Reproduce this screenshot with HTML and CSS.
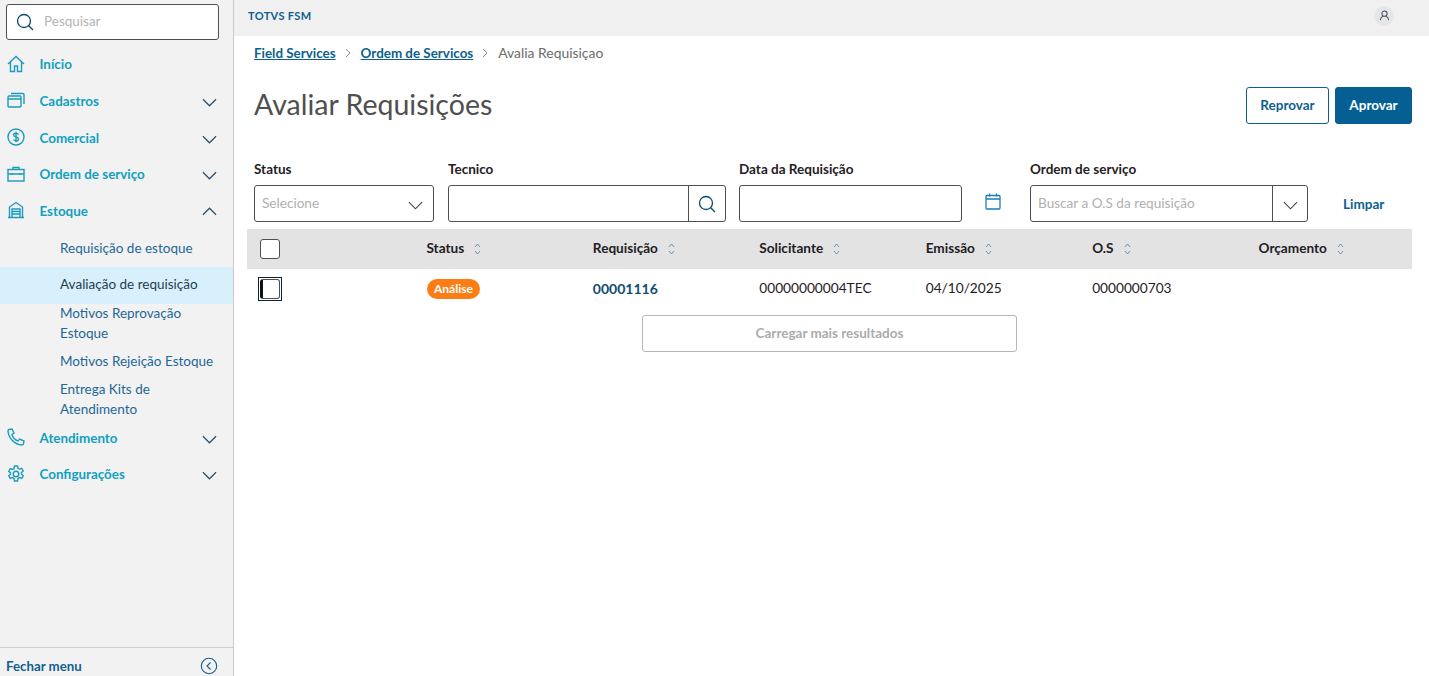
FILE: index.html
```html
<!DOCTYPE html>
<html lang="pt-BR">
<head>
<meta charset="utf-8">
<title>Avaliar Requisições</title>
<link rel="stylesheet" href="styles.css">
</head>
<body>
<div class="app">
  <aside class="sidebar">
    <div class="side-search">
      <div class="search-box">
        <svg class="ic-search" viewBox="0 0 18 18"><circle cx="8" cy="8" r="6.5"/><path d="M12.7 12.7L17 17"/></svg>
        <span class="placeholder">Pesquisar</span>
      </div>
    </div>
    <nav class="menu">
      <div class="item">
        <svg class="ic" viewBox="0 0 18 18"><path d="M1 9l8-7.5L17 9M3.5 7v9.5h4V11h3v5.5h4V7"/></svg>
        <span class="item-label">Início</span>
      </div>
      <div class="item">
        <svg class="ic" viewBox="0 0 18 18"><rect x="1" y="5" width="13" height="11" rx="1"/><path d="M1 8h13M4 2.5h12a1 1 0 0 1 1 1V13"/></svg>
        <span class="item-label">Cadastros</span>
        <svg class="chev" viewBox="0 0 16 9"><path d="M1 1l7 7 7-7"/></svg>
      </div>
      <div class="item">
        <svg class="ic" viewBox="0 0 18 18"><circle cx="9" cy="9" r="8"/><path d="M11.5 6.5C11 5.5 10 5.200 9 5.200c-1.500 0-2.500.8-2.500 1.900 0 2.700 5 1.200 5 3.800 0 1.100-1 1.900-2.500 1.900-1 0-2-.4-2.500-1.300M9 3.800v10.400"/></svg>
        <span class="item-label">Comercial</span>
        <svg class="chev" viewBox="0 0 16 9"><path d="M1 1l7 7 7-7"/></svg>
      </div>
      <div class="item">
        <svg class="ic" viewBox="0 0 18 18"><rect x="1" y="4.500" width="16" height="11.500"/><path d="M6 4.500V2.500h6v2M1 9h16M5 8v2M13 8v2"/></svg>
        <span class="item-label">Ordem de serviço</span>
        <svg class="chev" viewBox="0 0 16 9"><path d="M1 1l7 7 7-7"/></svg>
      </div>
      <div class="item">
        <svg class="ic" viewBox="0 0 18 18"><path d="M1 16.500h16M2.500 16.500V6L9 1.500 15.500 6v10.500M5 16.500V8h8v8.500M5 10.500h8M5 13h8"/></svg>
        <span class="item-label">Estoque</span>
        <svg class="chev chev-up" viewBox="0 0 16 9"><path d="M1 8l7-7 7 7"/></svg>
      </div>
      <div class="subs">
        <a class="sub sub-first">Requisição de estoque</a>
        <a class="sub sub-active">Avaliação de requisição</a>
        <a class="sub sub-two">Motivos Reprovação Estoque</a>
        <a class="sub sub-one">Motivos Rejeição Estoque</a>
        <a class="sub sub-two">Entrega Kits de Atendimento</a>
      </div>
      <div class="item">
        <svg class="ic" viewBox="0 0 18 18"><path d="M2 1.500L5 1l2 4-2 1.500c.8 3 3.200 5.500 6 6.500l1.700-2 4.300 2-.6 3c-.2.600-.8 1-1.400 1C7.500 16.500 1.500 10 1 3c0-.7.400-1.300 1-1.500z"/></svg>
        <span class="item-label">Atendimento</span>
        <svg class="chev" viewBox="0 0 16 9"><path d="M1 1l7 7 7-7"/></svg>
      </div>
      <div class="item">
        <svg class="ic" viewBox="0 0 18 18"><circle cx="9" cy="9" r="2.800"/><path d="M7.500 1h3l.5 2.300 1.500.8 2.200-.8 1.500 2.600-1.700 1.600v1.700l1.700 1.600-1.500 2.600-2.200-.8-1.500.8-.5 2.600h-3l-.5-2.600-1.500-.8-2.200.8-1.500-2.600 1.700-1.600V7.900L1.800 6.300l1.500-2.600 2.200.8 1.500-.8z"/></svg>
        <span class="item-label">Configurações</span>
        <svg class="chev" viewBox="0 0 16 9"><path d="M1 1l7 7 7-7"/></svg>
      </div>
    </nav>
    <div class="side-foot">
      <span class="foot-label">Fechar menu</span>
      <svg class="foot-ic" viewBox="0 0 18 18"><circle cx="9" cy="9" r="7.700"/><path d="M10.500 5.500L7 9l3.500 3.500"/></svg>
    </div>
  </aside>
  <div class="main">
    <header class="topbar">
      <span class="brand">TOTVS FSM</span>
      <span class="avatar"><svg viewBox="0 0 12 12"><circle cx="6" cy="4" r="2.800"/><path d="M1.500 11c.3-2.300 1.500-3.800 2.800-4.300M10.500 11c-.3-2.300-1.500-3.800-2.800-4.300"/></svg></span>
    </header>
    <div class="content">
      <div class="crumbs">
        <a class="crumb-link">Field Services</a>
        <svg class="crumb-sep" viewBox="0 0 6 10"><path d="M1 1l4 4-4 4"/></svg>
        <a class="crumb-link">Ordem de Servicos</a>
        <svg class="crumb-sep" viewBox="0 0 6 10"><path d="M1 1l4 4-4 4"/></svg>
        <span class="crumb-cur">Avalia Requisiçao</span>
      </div>
      <div class="head">
        <h1 class="title">Avaliar Requisições</h1>
        <div class="actions">
          <button class="btn btn-out">Reprovar</button>
          <button class="btn btn-fill">Aprovar</button>
        </div>
      </div>
      <div class="filters">
        <div class="field f-status">
          <label class="lbl">Status</label>
          <div class="ctl">
            <span class="ph grow">Selecione</span>
            <svg class="chev-d" viewBox="0 0 16 9"><path d="M1 1l7 7 7-7"/></svg>
          </div>
        </div>
        <div class="field f-tec">
          <label class="lbl">Tecnico</label>
          <div class="ctl ctl-tight">
            <span class="grow"></span>
            <span class="addon"><svg class="ic-search" viewBox="0 0 18 18"><circle cx="8" cy="8" r="6.500"/><path d="M12.700 12.700L17 17"/></svg></span>
          </div>
        </div>
        <div class="field f-date">
          <label class="lbl">Data da Requisição</label>
          <div class="ctl"></div>
        </div>
        <svg class="cal" viewBox="0 0 16 17"><rect x="1" y="2.500" width="14" height="13.500" rx="1"/><path d="M1 6h14M4.500 .5v3M11.500 .5v3"/></svg>
        <div class="field f-os">
          <label class="lbl">Ordem de serviço</label>
          <div class="ctl ctl-tight">
            <span class="ph grow">Buscar a O.S da requisição</span>
            <span class="addon addon-os"><svg class="chev-d" viewBox="0 0 16 9"><path d="M1 1l7 7 7-7"/></svg></span>
          </div>
        </div>
        <a class="clear">Limpar</a>
      </div>
      <div class="table">
        <div class="tr thead">
          <div class="td td-check"><span class="box"></span></div>
          <div class="td"><span class="th">Status</span><svg class="sort" viewBox="0 0 7 12"><path d="M1 4l2.500-3L6 4M1 8l2.500 3L6 8"/></svg></div>
          <div class="td"><span class="th">Requisição</span><svg class="sort" viewBox="0 0 7 12"><path d="M1 4l2.500-3L6 4M1 8l2.500 3L6 8"/></svg></div>
          <div class="td"><span class="th">Solicitante</span><svg class="sort" viewBox="0 0 7 12"><path d="M1 4l2.500-3L6 4M1 8l2.500 3L6 8"/></svg></div>
          <div class="td"><span class="th">Emissão</span><svg class="sort" viewBox="0 0 7 12"><path d="M1 4l2.500-3L6 4M1 8l2.500 3L6 8"/></svg></div>
          <div class="td"><span class="th">O.S</span><svg class="sort" viewBox="0 0 7 12"><path d="M1 4l2.500-3L6 4M1 8l2.500 3L6 8"/></svg></div>
          <div class="td"><span class="th">Orçamento</span><svg class="sort" viewBox="0 0 7 12"><path d="M1 4l2.500-3L6 4M1 8l2.500 3L6 8"/></svg></div>
        </div>
        <div class="tr tbody">
          <div class="td td-check"><span class="focus"><span class="box box-row"></span></span></div>
          <div class="td"><span class="tag">Análise</span></div>
          <div class="td"><a class="req">00001116</a></div>
          <div class="td"><span class="cell">00000000004TEC</span></div>
          <div class="td"><span class="cell">04/10/2025</span></div>
          <div class="td"><span class="cell">0000000703</span></div>
          <div class="td"></div>
        </div>
      </div>
      <div class="more-wrap"><button class="more">Carregar mais resultados</button></div>
    </div>
  </div>
</div>
</body>
</html>
```
FILE: styles.css
```css
* { box-sizing: border-box; }
html, body { margin: 0; height: 100%; overflow: hidden; background: #fff; }
body { font-family: "Lato", "Open Sans", sans-serif; font-size: 14px; color: #1f2024; }
.app { display: flex; height: 676px; }

.sidebar { width: 234px; flex: none; background: #f2f2f2; border-right: 1px solid #c9c9c9; display: flex; flex-direction: column; }
.side-search { padding: 4px 14px 0 6px; }
.search-box { height: 36px; background: #fff; border: 1px solid #4f4f4f; border-radius: 3px; display: flex; align-items: center; padding-left: 9px; gap: 10px; }
.ic-search { width: 18px; height: 18px; fill: none; stroke: #0c4a6e; stroke-width: 1.300; flex: none; }
.placeholder { color: #b5b5b5; font-size: 13.500px; padding-bottom: 3px; }
.menu { flex: 1; padding-top: 6.300px; }
.item { height: 36.700px; display: flex; align-items: center; padding: 0 16px 0 7px; color: #10a0c0; font-weight: 700; font-size: 13.400px; }
.item-label { flex: 1; padding-bottom: 1px; }
.ic { width: 18px; height: 18px; fill: none; stroke: #1b9cbd; stroke-width: 1.400; flex: none; margin: 0 14.500px 2px 0; }
.chev { width: 15px; height: 9px; fill: none; stroke: #2c4f6e; stroke-width: 1.300; flex: none; margin-top: 2px; }
.chev-up { margin-top: 0; }
.subs { display: flex; flex-direction: column; }
.sub { display: flex; align-items: center; padding: 0 10px 2px 60px; color: #1e6796; font-size: 13.500px; line-height: 20px; }
.sub-first { height: 37px; padding-bottom: 0; }
.sub-active { height: 37px; background: #d7f0fc; color: #24404f; border-radius: 0 4px 4px 0; }
.sub-two { height: 40px; }
.sub-one { height: 36px; }
.side-foot { height: 29px; border-top: 1px solid #cfcfcf; display: flex; align-items: center; justify-content: space-between; padding: 8px 15px 0 6px; color: #125f91; font-weight: 700; font-size: 13.300px; }
.foot-ic { width: 18px; height: 18px; fill: none; stroke: #125f91; stroke-width: 1.100; }

.main { flex: 1; min-width: 0; display: flex; flex-direction: column; }
.topbar { height: 36px; background: #f0f0f0; display: flex; align-items: center; justify-content: space-between; padding: 0 35px 5px 14px; }
.brand { font-size: 11px; font-weight: 700; color: #0c5f8f; letter-spacing: .35px; }
.avatar { width: 20px; height: 20px; border-radius: 50%; background: #e6e6e6; display: flex; align-items: center; justify-content: center; }
.avatar svg { width: 11px; height: 11px; fill: none; stroke: #3d4d62; stroke-width: 1.100; }

.content { padding: 0 17px 0 13px; }
.crumbs { height: 33px; display: flex; align-items: center; padding: 0 0 0 7px; font-size: 13.900px; }
.crumb-link { color: #0c5f8f; font-weight: 700; text-decoration: underline; font-size: 13.400px; }
.crumb-sep { width: 6px; height: 10px; fill: none; stroke: #8b8b8b; margin: 0 10px 0 9px; }
.crumb-cur { color: #6b6b6b; }
.head { display: flex; justify-content: space-between; align-items: center; height: 37px; margin-top: 18px; padding-left: 7px; }
.title { margin: 0 0 4px; font-size: 28.500px; font-weight: 400; color: #4f4f4f; }
.actions { display: flex; gap: 6px; }
.btn { height: 37px; border-radius: 3px; font-family: inherit; font-size: 13.500px; font-weight: 700; padding: 0 0 2px; }
.btn-out { width: 83px; background: #fff; border: 1px solid #0c5f8f; color: #0c5f8f; }
.btn-fill { width: 77px; background: #055f92; border: 1px solid #055f92; color: #fff; }

.filters { display: flex; align-items: flex-end; margin-top: 35px; padding-left: 7px; }
.field { display: flex; flex-direction: column; flex: none; }
.lbl { font-size: 13.500px; font-weight: 700; line-height: 20px; margin-bottom: 6px; }
.ctl { height: 37px; border: 1px solid #4f4f4f; border-radius: 3px; background: #fff; display: flex; align-items: center; padding: 0 10px 0 7px; }
.ctl-tight { padding-right: 0; }
.grow { flex: 1; }
.ph { color: #b0b0b0; font-size: 13.600px; padding-bottom: 1px; }
.chev-d { width: 15px; height: 9px; fill: none; stroke: #3f3f3f; stroke-width: 1.200; flex: none; margin-top: 3px; }
.addon { width: 37px; height: 100%; border-left: 1px solid #4f4f4f; display: flex; align-items: center; justify-content: center; flex: none; }
.addon-os { width: 35px; }
.f-status { width: 180px; margin-right: 14px; }
.f-tec { width: 278px; margin-right: 13px; }
.f-date { width: 223px; margin-right: 23px; }
.cal { width: 16px; height: 17px; fill: none; stroke: #1a7db5; stroke-width: 1.300; flex: none; margin: 0 29px 12px 0; }
.f-os { width: 278px; margin-right: 35px; }
.clear { color: #0c5f8f; font-weight: 700; font-size: 13.500px; margin-bottom: 10px; }

.table { margin-top: 7px; }
.tr { display: grid; grid-template-columns: repeat(7, 1fr); align-items: center; }
.td { display: flex; align-items: center; padding-left: 13px; }
.thead { height: 40px; background: #e3e3e3; font-weight: 700; }
.tbody { height: 39px; }
.th { font-size: 13.600px; padding-bottom: 2px; }
.cell { font-size: 13.700px; padding-bottom: 3px; }
.box { display: block; width: 20px; height: 20px; background: #fff; border: 1px solid #4f4f4f; border-radius: 3px; }
.focus { display: block; border: 1px solid #0a2433; padding: 1px; margin-left: -2px; }
.box-row { border-left: 3px solid #111; }
.sort { width: 7px; height: 12px; fill: none; stroke: #4b7fa3; stroke-width: .8; margin-left: 10px; }
.tag { background: #fb7d13; color: #fff; font-size: 12px; font-weight: 700; height: 20px; width: 53px; margin-left: .5px; border-radius: 10px; display: flex; align-items: center; justify-content: center; }
.req { color: #0f4c72; font-weight: 700; padding-bottom: 1px; }
.more-wrap { display: flex; justify-content: center; margin-top: 7px; }
.more { width: 375px; height: 37px; background: #fff; border: 1px solid #b5b5b5; border-radius: 3px; font-family: inherit; font-size: 13.500px; font-weight: 700; color: #ababab; padding: 0 0 2px; }
```
